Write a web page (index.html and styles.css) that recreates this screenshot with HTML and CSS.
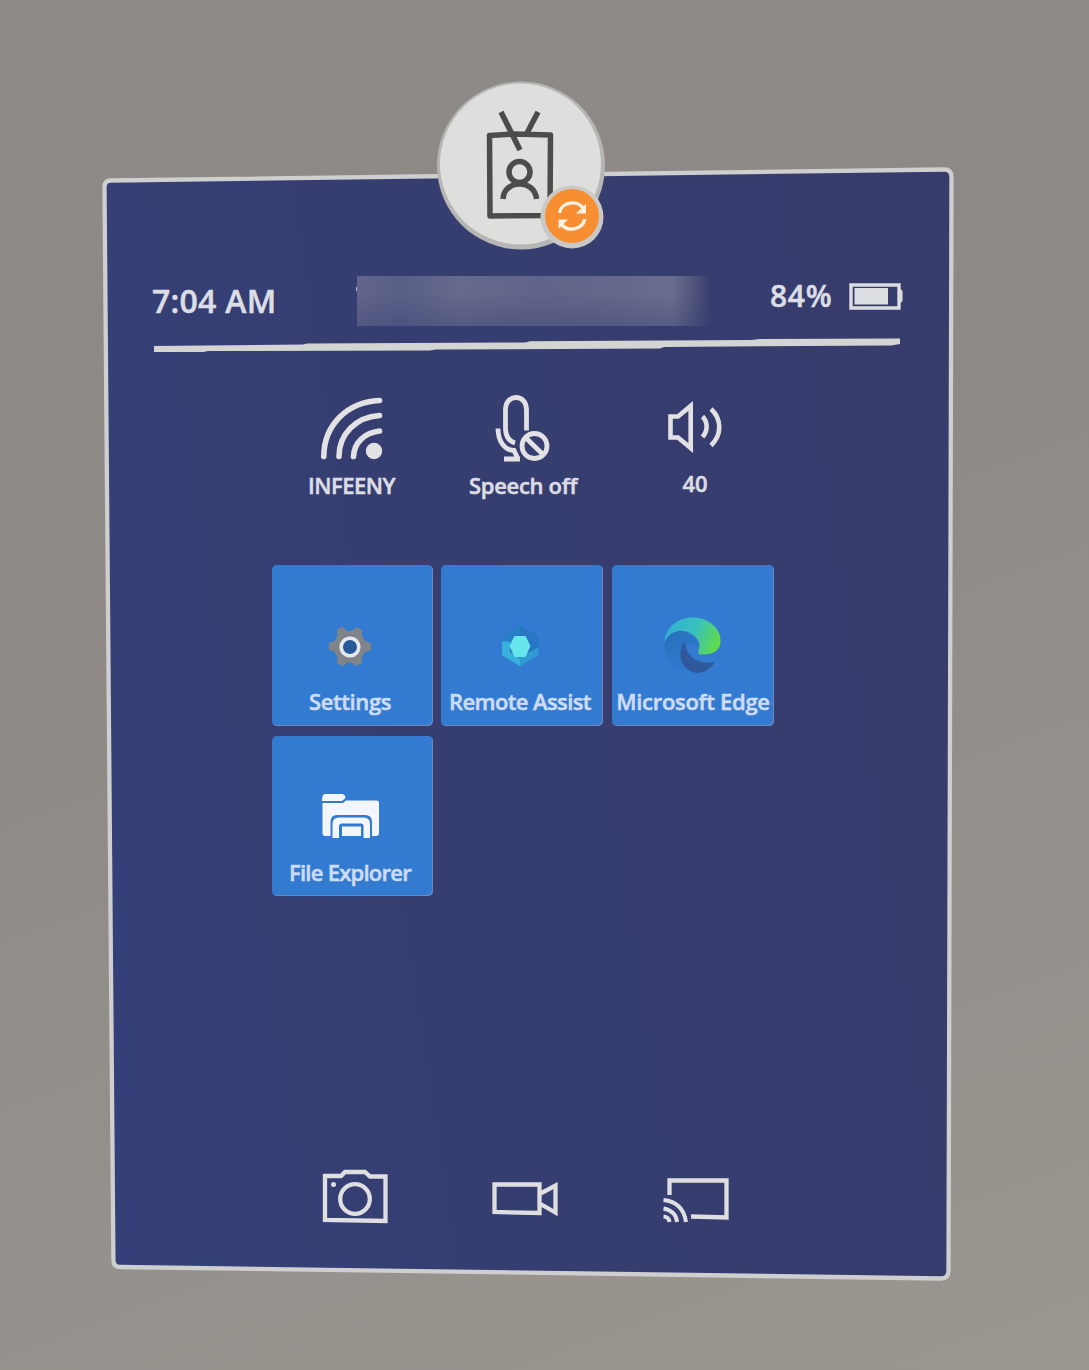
FILE: index.html
```html
<!DOCTYPE html>
<html lang="en">
<head>
<meta charset="utf-8">
<title>Start menu</title>
<link rel="stylesheet" href="styles.css">
</head>
<body>
<main class="scene">
  <svg class="frame" viewBox="0 0 1089 1370" aria-hidden="true">
    <defs>
      <linearGradient id="panel" x1="0" y1="0.6" x2="1" y2="0.4">
        <stop offset="0" stop-color="#344077"/>
        <stop offset="0.35" stop-color="#363e71"/>
        <stop offset="1" stop-color="#373c6c"/>
      </linearGradient>
    </defs>
    <path d="M111 180.5 L944 169.5 Q951.5 169.500 951.500 177 L948.500 1271 Q948.500 1278.500 941 1278.500 L120 1267 Q113.500 1267 113.400 1260 L104.500 187 Q104.500 180.500 111 180.500Z" fill="url(#panel)" stroke="#cfcfd0" stroke-width="4.300"/>
  </svg>
  <section class="panel">
    <div class="avatar">
      <svg class="avatar-art" viewBox="436 80 170 171">
        <circle cx="521" cy="165.500" r="84" fill="#b6b6b5"/>
        <circle cx="520.500" cy="164" r="80.500" fill="#dededd"/>
        <g fill="none" stroke="#4b4c4c" stroke-width="5.500" stroke-linejoin="round">
          <path d="M489.500 135.500 L515 134 L550.500 135 L550 215.500 L490 216Z"/>
          <path d="M501 112 L520 150 M538 112 L527 133"/>
          <circle cx="519.500" cy="172" r="10.500"/>
          <path d="M503 199 C504 179 535 179 536.500 199"/>
        </g>
        <circle cx="572" cy="217" r="31.500" fill="#c9c9c8"/>
        <circle cx="572" cy="216" r="27" fill="#f78e31"/>
        <g fill="none" stroke="#fff0e2" stroke-width="3.400">
          <path d="M559.500 213 C561 202 578 199 583.500 209"/>
          <path d="M585 219 C582 231 566 232 560.500 223"/>
        </g>
        <path d="M586 204 V213.500 H576Z M558.500 229 V219.500 H568Z" fill="#fff0e2"/>
      </svg>
    </div>
    <header class="status">
      <span class="time">7:04 AM</span>
      <span class="account"></span>
      <span class="battery-level">84%</span>
      <svg class="battery" viewBox="849 282 54 29">
        <path d="M851 285 H899 V308 H851Z" fill="none" stroke="#dcdde0" stroke-width="3.400"/>
        <path d="M854.500 288 H888 V304.500 H854.500Z" fill="#dcdde0"/>
        <path d="M899.500 288 L902.500 291 V301 L899.500 304Z" fill="#dcdde0"/>
      </svg>
    </header>
    <svg class="divider" viewBox="154 337 746 16">
      <path d="M154 346 L303 344.500 L307 343.500 L525 342.500 L530 341.200 L751 340 L760 339 L900 338.500 V344 L891 345.500 L664 347 L660 348.500 L436 349.500 L430 350.500 L208 351 L204 352 H154Z" fill="#d4d4d2"/>
    </svg>
    <div class="toggles">
      <div class="toggle">
        <svg viewBox="317 392 70 72">
          <g fill="none" stroke="#e2e2e5" stroke-width="5.600" stroke-linecap="round">
            <path d="M323.800 456.500 C324 425 347 402 379.500 400.500"/>
            <path d="M339 456.500 C339 434 356 417 379.500 415.500"/>
            <path d="M353.500 456.500 C354 443 364 433 379.500 431"/>
          </g>
          <circle cx="374" cy="451" r="8.200" fill="#e2e2e5"/>
        </svg>
        <span class="wifi-name">INFEENY</span>
      </div>
      <div class="toggle">
        <svg viewBox="488 391.500 70 72">
          <g fill="none" stroke="#e2e2e5" stroke-width="4.800">
            <path d="M526.500 430 V409 C526.500 393 505.500 393 505.500 409 V429 C506 437 510 441 515 442.500"/>
            <path d="M498 428 C498 441 505 450 514 450 L518 458.500 M504 458.500 H520"/>
            <circle cx="534.500" cy="445.500" r="12.500"/>
            <path d="M525.500 437 L543.500 454.500"/>
          </g>
        </svg>
        <span class="speech">Speech off</span>
      </div>
      <div class="toggle">
        <svg viewBox="660 391 70 72">
          <g fill="none" stroke="#e2e2e5" stroke-width="4.600">
            <path d="M670.500 415.500 H678 L690.700 405 V447 L678 436.500 H670.500Z"/>
            <path d="M702.500 415.500 C708 421 708 430 702.500 436 M711 408 C722 418 722 434 711 444.500"/>
          </g>
        </svg>
        <span class="volume">40</span>
      </div>
    </div>
    <nav class="tiles">
      <div class="tile left">
        <svg viewBox="316 612 68 68">
          <path d="M344 628 L347 631 H352 L356 627 L362 630 L362 636 L365 641 L371 643 V650 L364 653 L361.500 658 L362 663 L356 666 L351 662.500 H347 L343 666 L337 663 L337.500 657 L334.500 652 L329 650 V643 L334.500 641 L337.500 636 L337 630 L342 626.500Z" fill="#808488"/>
          <circle cx="350" cy="647" r="8.800" fill="#285a9c" stroke="#e5eaf1" stroke-width="3.600"/>
        </svg>
        <span class="settings">Settings</span>
      </div>
      <div class="tile middle">
        <svg viewBox="486 612 68 68">
          <path d="M520 625 L538.500 636 V654 L520 666 L502 654 V636Z" fill="#2976c4"/>
          <path d="M520 625 L502 636 V654 L520 642Z" fill="#287fc8"/>
          <path d="M538.500 647 V655 L520 666.500 L502 655 V647 L520 658Z" fill="#309bd1"/>
          <path d="M502 641 L510 642 V653 L520 659 V666 L502 655Z" fill="#38b1dc"/>
          <path d="M514.500 636 H525.500 L530.500 646 L525.500 657 H514.500 L509.500 646Z" fill="#67e5ed"/>
        </svg>
        <span class="remote">Remote Assist</span>
      </div>
      <div class="tile">
        <svg viewBox="659 612 68 68">
          <defs>
            <linearGradient id="edge-top" x1="0" y1="0.350" x2="1" y2="0.650">
              <stop offset="0" stop-color="#35b0d8"/>
              <stop offset="0.500" stop-color="#38c1bc"/>
              <stop offset="1" stop-color="#62dc43"/>
            </linearGradient>
            <linearGradient id="edge-side" x1="0" y1="0" x2="0.600" y2="1">
              <stop offset="0" stop-color="#286fb7"/>
              <stop offset="1" stop-color="#307bd2"/>
            </linearGradient>
          </defs>
          <path d="M664.500 642 C668 629 684 629 689 634 C699 640 701 645 698 648 C693 640 682 645 684 656 C685 667 692 672 697 673 C680 675 663 661 664.500 642Z" fill="url(#edge-side)"/>
          <path d="M684 642 C676 655 682 673 699 673 C706 672 712 667 715 662 C703 665 689 660 686 647Z" fill="#30599d"/>
          <path d="M664.500 640 C669 612 710 610 719.500 634 C723 648 717 655 701 654.500 C695 654 701 649 699 642 C693 629 672 625 664.500 642Z" fill="url(#edge-top)"/>
        </svg>
        <span class="edge">Microsoft Edge</span>
      </div>
      <div class="tile left">
        <svg viewBox="316 783 68 68">
          <path d="M325 794 H342 Q345 794 345.500 798 L342 801 H322 Q322 794 325 794Z M322.500 803 H343 L346 800.500 H377 Q379 800.500 379 803 V833 Q379 836 376 836 H372 V822 Q372 815 365 815 H337 Q330.500 815 330.500 822 V836 H325 Q322.500 836 322.500 833Z" fill="#f3f6fa"/>
          <path d="M332.500 838 V824 Q332.500 817.500 339 817.500 H364 Q370 817.500 370 824 V838 H363.500 V826 Q363.500 823.500 361 823.500 H342 Q339 823.500 339 826 V838Z M342 826.500 H361 V836 H342Z" fill="#f3f6fa"/>
        </svg>
        <span class="files">File Explorer</span>
      </div>
    </nav>
    <footer class="actions">
      <svg viewBox="320 1163.500 70 64">
        <g fill="none" stroke="#dfdfe2" stroke-width="4.300">
          <path d="M325 1175.500 H341 L345 1171.500 H365 L370 1176 H385.500 V1220.500 L325 1219.500Z"/>
          <circle cx="355" cy="1198.500" r="14.800"/>
        </g>
        <circle cx="333.500" cy="1184" r="2.500" fill="#dfdfe2"/>
      </svg>
      <svg viewBox="490 1164 70 64">
        <path d="M494.500 1184.500 H539.500 V1213 L494.500 1212Z M540.500 1193.500 L555.500 1185.500 V1212.500 L540.500 1204" fill="none" stroke="#dfdfe2" stroke-width="4.300"/>
      </svg>
      <svg viewBox="660 1164 70 64">
        <g fill="none" stroke="#dfdfe2" stroke-width="4.300">
          <path d="M669.500 1195 V1180.500 H726.500 V1217.500 L691 1216.500"/>
          <path d="M663.500 1200 Q683 1202 686 1222 M663.500 1208.500 Q676 1211 677 1222 M663.500 1216.500 Q669 1217 669.500 1222" stroke-width="4"/>
        </g>
      </svg>
    </footer>
  </section>
</main>
</body>
</html>
```

FILE: styles.css
```css
* {
  box-sizing: border-box;
}

body {
  margin: 0;
  font-family: "Open Sans", "Noto Sans", sans-serif;
  font-weight: 600;
  color: #dddee4;
  -webkit-text-stroke: 0.5px currentColor;
}

.scene {
  position: relative;
  width: 1089px;
  height: 1370px;
  padding: 167px 135px 89px 102px;
  background: linear-gradient(160deg, #8e8a87 0%, #8e8985 40%, #94908b 70%, #9b9690 100%);
}

.frame {
  position: absolute;
  inset: 0;
  width: 1089px;
  height: 1370px;
}

.panel {
  position: relative;
  height: 1114px;
  padding-top: 109px;
}

.avatar {
  position: absolute;
  top: -87px;
  left: 334px;
  width: 170px;
  height: 171px;
}

.avatar-art,
.toggle svg,
.tile svg {
  display: block;
}

.status {
  display: flex;
  height: 50px;
  margin-left: 50px;
  width: 751px;
  white-space: nowrap;
}

.time {
  width: 205px;
  font-size: 32px;
  line-height: 50px;
  letter-spacing: 0.25px;
}

.account {
  position: relative;
  width: 362px;
  background:
    linear-gradient(180deg, transparent 35%, rgba(54, 61, 112, 0.35) 100%),
    linear-gradient(90deg, #62658b 0%, #595f87 12%, #66698b 28%, #61648a 50%, #64678a 70%, #6a6d8e 87%, #55597f 92%, rgba(54, 61, 112, 0) 98%);
}

.account::before {
  content: "";
  position: absolute;
  left: -1px;
  top: 11px;
  width: 1px;
  height: 4px;
  background: #b9bccb;
}

.battery-level {
  margin-left: 51px;
  width: 79px;
  font-size: 30px;
  line-height: 40px;
  letter-spacing: 0.7px;
}

.battery {
  width: 54px;
  height: 29px;
  margin-top: 6px;
}

.divider {
  display: block;
  width: 746px;
  height: 16px;
  margin: 11px 0 0 52px;
}

.toggles {
  display: grid;
  grid-template-columns: 171px 172px 172px;
  margin: 39px 0 0 164px;
}

.toggle {
  display: flex;
  flex-direction: column;
  align-items: center;
  font-size: 22px;
  line-height: 30px;
  white-space: nowrap;
}

.toggle svg {
  width: 70px;
  height: 72px;
}

.toggle span {
  margin-top: 6px;
}

.toggle .wifi-name {
  letter-spacing: -0.5px;
}

.toggle .speech {
  letter-spacing: -0.3px;
}

.toggle .volume {
  margin-top: 4px;
}

.tiles {
  display: grid;
  grid-template-columns: 161px 163px 162px;
  grid-template-rows: 161px 160px;
  gap: 10px 8px;
  margin: 65px 0 0 170px;
}

.tile {
  display: flex;
  flex-direction: column;
  align-items: center;
  padding-top: 47px;
  border-radius: 5px;
  background: #337bd1;
  box-shadow: inset -1px -1px 0 #7187bb;
  color: #cfdcf7;
  font-size: 22px;
  line-height: 30px;
  white-space: nowrap;
}

.tile.left {
  padding-right: 5px;
}

.tile.middle {
  width: 162px;
  padding-right: 4px;
}

.tile svg {
  width: 68px;
  height: 68px;
  margin-bottom: 6px;
}

.settings {
  letter-spacing: -0.4px;
}

.remote {
  letter-spacing: -0.6px;
}

.edge {
  letter-spacing: -0.3px;
}

.files {
  letter-spacing: -0.75px;
}

.actions {
  display: flex;
  gap: 100px;
  margin: 268px 0 0 218px;
}

.actions svg {
  width: 70px;
  height: 64px;
}
```
